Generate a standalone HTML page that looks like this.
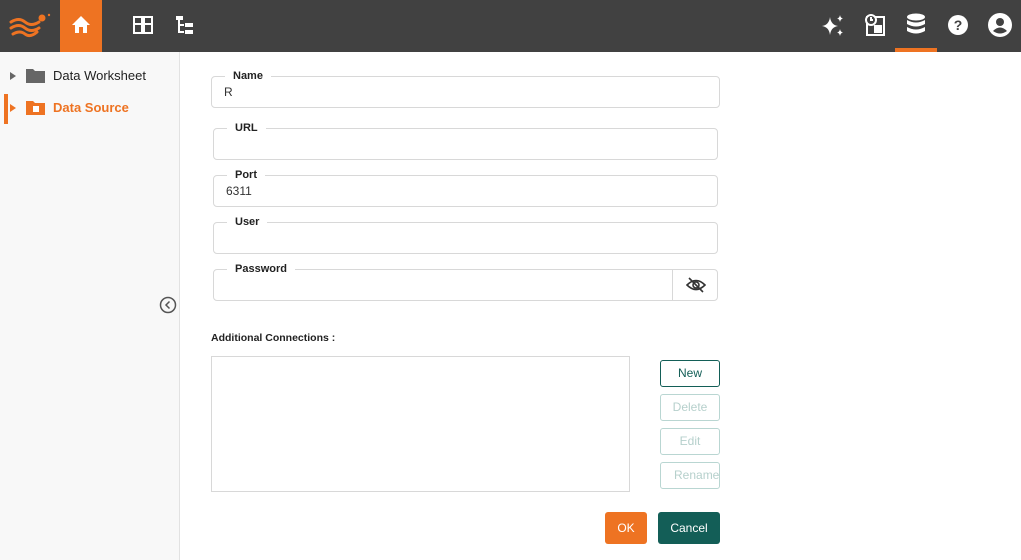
<!DOCTYPE html>
<html><head><style>
*{box-sizing:border-box;margin:0;padding:0}
body{width:1021px;height:560px;overflow:hidden;font-family:"Liberation Sans",sans-serif;background:#fff;position:relative;color:#222}
.top{position:absolute;left:0;top:0;width:1021px;height:52px;background:#414141}
.home{position:absolute;left:60px;top:0;width:42px;height:52px;background:#ee7322}
.side{position:absolute;left:0;top:52px;width:180px;height:508px;background:#f8f8f8;border-right:1px solid #e2e2e2}
.item{position:absolute;left:0;font-size:13px;display:flex;align-items:center}
.fs{position:absolute;border:1px solid #d8d8d8;border-radius:4px}
.fs span{position:absolute;top:-8px;left:13px;background:#fff;padding:0 8px;font-size:11px;font-weight:bold;color:#222;line-height:14px}
.fs i{position:absolute;left:12px;top:8px;font-style:normal;font-size:12px;color:#333}
.btn{position:absolute;left:660px;width:60px;height:27px;border:1px solid #b9d6d2;border-radius:3px;font-size:12px;color:#b6d0cc;text-align:center;line-height:25px;overflow:hidden;white-space:nowrap}
</style></head><body>
<div class="top">
 <svg style="position:absolute;left:8px;top:10px" width="44" height="30" viewBox="0 0 44 30"><g fill="none" stroke="#ee7322" stroke-width="3" stroke-linecap="round"><path d="M3 12 q8-5 14 0 t14 0"/><path d="M3 18 q8-5 14 0 t14 0"/><path d="M5 24 q7-4 12 0 t12-2"/></g><circle cx="34" cy="8" r="3.5" fill="#ee7322"/><circle cx="41" cy="5" r="1.2" fill="#ee7322"/></svg>
 <div class="home"><svg style="position:absolute;left:11px;top:15px" width="20" height="19" viewBox="0 0 20 19"><path d="M10 1 L19 10 H16 V18 H12 V12 H8 V18 H4 V10 H1Z" fill="#fff"/></svg></div>
 <svg style="position:absolute;left:132px;top:14px" width="22" height="22" viewBox="0 0 22 22" fill="none" stroke="#fff" stroke-width="2"><path d="M2 3h8v16H2z M12 3h8v16h-8z M2 10h18"/></svg>
 <svg style="position:absolute;left:175px;top:15px" width="20" height="20" viewBox="0 0 20 20" fill="#fff"><rect x="1" y="1" width="7" height="4"/><rect x="3" y="5" width="2" height="13"/><rect x="3" y="9" width="6" height="2"/><rect x="3" y="16" width="6" height="2"/><rect x="10" y="8" width="8" height="4"/><rect x="10" y="15" width="8" height="4"/></svg>
 <svg style="position:absolute;left:821px;top:14px" width="24" height="24" viewBox="0 0 24 24" fill="#fff"><path d="M9 3 Q10 11 17 12 Q10 13 9 21 Q8 13 1 12 Q8 11 9 3Z"/><path d="M19 1 Q19.5 4 22 4.5 Q19.5 5 19 8 Q18.5 5 16 4.5 Q18.5 4 19 1Z"/><path d="M19 15 Q19.5 18 22 18.5 Q19.5 19 19 22 Q18.5 19 16 18.5 Q18.5 18 19 15Z"/></svg>
 <svg style="position:absolute;left:864px;top:13px" width="22" height="24" viewBox="0 0 22 24" fill="none" stroke="#fff" stroke-width="2"><rect x="3" y="4" width="17" height="18"/><circle cx="7" cy="7" r="5" fill="#414141"/><path d="M7 4v3h2"/><rect x="11" y="13" width="6" height="6" fill="#fff"/></svg>
 <svg style="position:absolute;left:906px;top:13px" width="20" height="22" viewBox="0 0 20 22" fill="#fff"><ellipse cx="10" cy="4" rx="9" ry="3.5"/><path d="M1 7 q9 5 18 0 v4 q-9 5-18 0z"/><path d="M1 14 q9 5 18 0 v4 q-9 5-18 0z"/></svg>
 <div style="position:absolute;left:895px;top:48px;width:42px;height:4px;background:#ee7322"></div>
 <svg style="position:absolute;left:947px;top:14px" width="22" height="22" viewBox="0 0 22 22"><circle cx="11" cy="11" r="10" fill="#fff"/><text x="11" y="16" text-anchor="middle" font-family="Liberation Sans" font-weight="bold" font-size="14" fill="#414141">?</text></svg>
 <svg style="position:absolute;left:987px;top:12px" width="26" height="26" viewBox="0 0 26 26"><circle cx="13" cy="13" r="12" fill="#fff"/><circle cx="13" cy="10" r="4" fill="#414141"/><path d="M6 19 q7-7 14 0 q-7 5-14 0z" fill="#414141"/></svg>
</div>
<div class="side">
 <div class="item" style="top:16px"><span style="margin-left:10px;border-left:6px solid #666;border-top:4px solid transparent;border-bottom:4px solid transparent"></span><svg style="margin-left:10px" width="19" height="15" viewBox="0 0 19 15"><path d="M0 1h7l2 2h10v12H0z" fill="#666"/></svg><span style="margin-left:8px;color:#222">Data Worksheet</span></div>
 <div style="position:absolute;left:4px;top:42px;width:4px;height:30px;background:#ee7322"></div>
 <div class="item" style="top:48px"><span style="margin-left:10px;border-left:6px solid #ee7322;border-top:4px solid transparent;border-bottom:4px solid transparent"></span><svg style="margin-left:10px" width="19" height="15" viewBox="0 0 19 15"><path d="M0 1h7l2 2h10v12H0z" fill="#ee7322"/><rect x="7" y="6" width="6" height="6" fill="#fff"/></svg><span style="margin-left:8px;color:#ee7322;font-weight:bold">Data Source</span></div>
 <svg style="position:absolute;left:159px;top:244px" width="18" height="18" viewBox="0 0 18 18" fill="none" stroke="#555" stroke-width="1.5"><circle cx="9" cy="9" r="7.5"/><path d="M10.5 5.5 L7 9 L10.5 12.5"/></svg>
</div>
<div class="fs" style="left:211px;top:76px;width:509px;height:32px"><span>Name</span><i>R</i></div>
<div class="fs" style="left:213px;top:128px;width:505px;height:32px"><span>URL</span></div>
<div class="fs" style="left:213px;top:175px;width:505px;height:32px"><span>Port</span><i>6311</i></div>
<div class="fs" style="left:213px;top:222px;width:505px;height:32px"><span>User</span></div>
<div class="fs" style="left:213px;top:269px;width:505px;height:32px"><span>Password</span>
 <div style="position:absolute;left:458px;top:0;width:1px;height:30px;background:#d8d8d8"></div>
 <svg style="position:absolute;left:472px;top:7px" width="20" height="16" viewBox="0 0 20 16" fill="none" stroke="#333" stroke-width="1.6"><path d="M1 8 Q10 -1 19 8 Q10 17 1 8Z"/><circle cx="10" cy="8" r="3"/><path d="M3 1 L17 15"/></svg>
</div>
<div style="position:absolute;left:211px;top:332px;font-size:10.5px;font-weight:bold">Additional Connections :</div>
<div style="position:absolute;left:211px;top:356px;width:419px;height:136px;border:1px solid #d8d8d8"></div>
<div class="btn" style="top:360px;border-color:#135e57;color:#135e57">New</div>
<div class="btn" style="top:394px">Delete</div>
<div class="btn" style="top:428px">Edit</div>
<div class="btn" style="top:462px;text-align:left;padding-left:13px">Rename</div>
<div style="position:absolute;left:605px;top:512px;width:42px;height:32px;background:#ee7322;border-radius:3px;color:#fff;font-size:12px;text-align:center;line-height:32px">OK</div>
<div style="position:absolute;left:658px;top:512px;width:62px;height:32px;background:#135e57;border-radius:3px;color:#fff;font-size:12px;text-align:center;line-height:32px">Cancel</div>
</body></html>
